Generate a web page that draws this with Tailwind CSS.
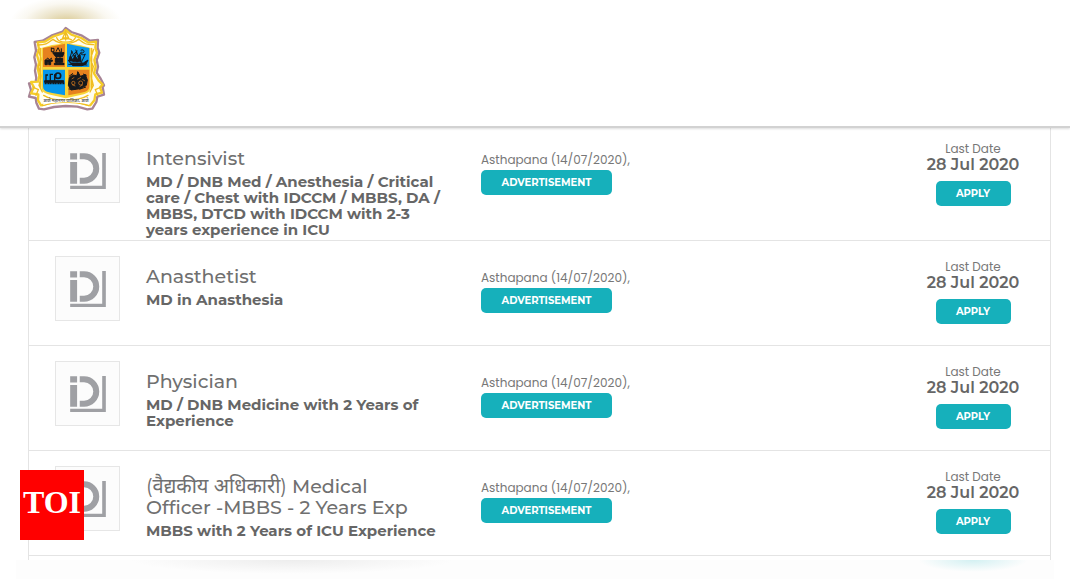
<!DOCTYPE html>
<html lang="en">
<head>
<meta charset="utf-8">
<meta name="viewport" content="width=device-width, initial-scale=1">
<title>Openings</title>
<script src="https://cdn.jsdelivr.net/npm/@tailwindcss/browser@4"></script>
</head>
<body class="relative bg-white font-[Montserrat,Inter,'Noto_Sans_Devanagari','Noto_Sans',sans-serif] text-[#666]">
<svg class="hidden" aria-hidden="true">
  <symbol id="mark" viewBox="150 84 108 109">
    <path fill="#9fa0a4" d="M150 85h21v19h-21zM150 111h21v66h-21zM179 85h13a46 46 0 0 1 0 92h-13v-18h13a28 28 0 0 0 0-56h-13zM247 84h11v109H150v-10h97z"/>
  </symbol>
</svg>

<header class="relative z-10 -mb-1.5 h-32 border-b-2 border-[#d2d2d2] bg-white pl-7 shadow-[0_1px_2px_#0002]">
  <div class="-ml-7 h-[19px] bg-[radial-gradient(ellipse_56px_26px_at_66px_23px,#d8c78d,#ebe3c8_40%,#faf8f1_75%,#fff)]"></div>
  <svg class="mt-[7px] h-[86px] w-[78px] overflow-visible" viewBox="84 78 234 258" role="img" aria-label="Municipal corporation emblem">
    <g stroke-linejoin="round">
      <path fill="#fff" stroke="#a78495" stroke-width="7" d="M197 84l17 12 32 11 24 15 24-2-1 24 5 14-8 22 4 20-4 18 12 18 10 20-4 6 4 22-20 6-3 16-12 20-15 2-30-8-35-2-35 3-30 7-15-2-8-18-2-14-20-4 6-20-6-20 19-1 3-15-4-22 3-18-5-22 5-20-4-26 24-4 26-15 34-12z"/>
      <path fill="#fffdf0" stroke="#f5cc28" stroke-width="7" d="M197 90l17 14 30 10 22 14 22-3-2 18 5 15-8 22 4 20-5 20 14 22 12 12-8 8 6 16-20 5-3 18-12 15-34-8-40-3-40 3-34 8-9-15 1-18-22-3 9-18-9-16 21-1 4-18-5-22 4-18-6-22 6-18-4-20 21-2 27-16 30-10z"/>
    </g>
    <g fill="none" stroke="#f0bd20" stroke-width="4" stroke-linecap="round">
      <path d="M114 135c22-1 27-3 45-17 20 17 57 17 77 0 16 13 24 17 45 16M114 148l10 30-9 22 9 28-7 28 10 20M281 148l-10 30 9 22-7 28 7 28-10 20M98 261l17 8-7 17M304 261l-18 8 7 17M121 145v120M275 145v120"/>
      <path d="M182 119c8-4 24-4 32 0M188 114l9-19 9 19zM197 90v30M170 113c5 18 49 18 56 0M131 286c20 13 38 15 66 15s46-2 67-15M128 317c22-8 41-12 69-12s47 4 69 12"/>
    </g>
    <path fill="#f9d437" d="M197 124l11 7 32 4 32 9v118c0 15-15 21-34 24l-41 9-39-9c-19-3-34-9-34-24V144l32-9 31-4z"/>
    <path fill="#e6821e" d="M129 144l34-6 32-7v70h-66z"/>
    <path fill="#0897ea" d="M201 131l32 7 35 6v57h-67z"/>
    <path fill="#0897ea" d="M129 209h66v77l-38-7c-20-4-28-8-28-22z"/>
    <path fill="#e6821e" d="M205 209h63v48c0 14-8 18-28 22l-35 7z"/>
    <g fill="none" stroke="#15181c" stroke-width="3">
      <path fill="#15181c" d="M158 158h34l-4 12h-21zM166 175h22v12h-22zM163 190h29v4h-29zM135 180h22v4h-5v10h-6v-7h-4v7h-7z"/>
      <path d="M154 143v12h8v-10h-8M174 143l-6 12M174 143l7 14M184 145v12M170 170v20M180 170v22M138 179l5-5 5 5 8-5"/>
      <path fill="#15181c" d="M205 181l7 8h38l14-9-6 12-12 5h-28zM211 168l10 15h-14zM224 166l11 18h-17zM240 164l3 20h-14z"/>
      <path d="M214 151l17 36M227 149l15 36M216 153l-8 26 23-27-9 31 23-28M242 151c11-6 14 8 4 8s3 10 10 3l-13 27M205 193l57 2"/>
      <path stroke-width="4" d="M138 245v-20h6M151 245v-22h8M164 245v-20h6"/><circle cx="174" cy="227" r="8" stroke-width="5"/>
      <path fill="#15181c" d="M134 242h57v5h-57z"/><path stroke-dasharray="4 1" stroke-width="6" d="M134 250h59"/>
      <path fill="#15181c" d="M208 233l10-8 12 2 4-11 7 13 15-5 6 16-3 16-19 10-27 4-8-14z"/>
      <path d="M207 229l12-9M233 214v16M249 222l11 4M206 267h21M238 268l20-7"/>
    </g>
    <g fill="none" stroke="#e6821e" stroke-width="2"><path d="M215 237l8-5M232 238l11-6M247 238l8 5M216 254l10 4M239 260l10-6"/><circle cx="220" cy="249" r="5"/><circle cx="242" cy="249" r="6"/></g>
    <path fill="#fff" d="M130 291c36 13 102 13 138 0v24c-32-11-106-11-138 0z"/>
    <text x="198" y="307" text-anchor="middle" fill="#555" font-family="Noto Sans Devanagari, Noto Sans, sans-serif" font-size="13" font-weight="600">ठाणे महानगर पालिका, ठाणे</text>
  </svg>
</header>

<main class="ml-7 mr-[19px] border-x border-t border-[#e4e4e4]">
  <ul>
    <li class="flex min-h-[118px] border-b border-[#e4e4e4]">
      <div class="ml-[26px] mt-[15px] flex size-[65px] shrink-0 items-center justify-center border border-[#e6e6e6] bg-[#fcfcfc]"><svg class="size-9" role="img" aria-label="iD"><use href="#mark"/></svg></div>
      <div class="ml-[26px] w-[295px] shrink-0 pt-[25px]">
        <h2 class="pr-4 text-[19px] leading-[21px] font-medium text-[#707070]">Intensivist</h2>
        <p class="mt-[5px] text-[15px] leading-4 font-bold">MD / DNB Med / Anesthesia / Critical care / Chest with IDCCM / MBBS, DA / MBBS, DTCD with IDCCM with 2-3 years experience in ICU</p>
      </div>
      <div class="ml-10 pt-[27px] font-[Poppins,Montserrat,Inter,sans-serif] text-xs leading-[19px] text-[#777]">
        <p>Asthapana (14/07/2020),</p>
        <button class="mt-px block h-[25px] w-[131px] rounded-[5px] bg-[#16b0bb] font-[Montserrat,Inter,sans-serif] text-[10px] font-bold text-white">ADVERTISEMENT</button>
      </div>
      <div class="ml-auto w-[154px] shrink-0 pt-[17px] text-center">
        <p class="font-[Poppins,Montserrat,Inter,sans-serif] text-xs leading-[17px] text-[#777]">Last Date</p>
        <p class="text-base leading-4 font-semibold">28 Jul 2020</p>
        <button class="mt-2 h-[25px] w-[75px] rounded-[5px] bg-[#16b0bb] text-[10px] font-bold text-white">APPLY</button>
      </div>
    </li>
    <li class="flex min-h-[105px] border-b border-[#e4e4e4]">
      <div class="ml-[26px] mt-[15px] flex size-[65px] shrink-0 items-center justify-center border border-[#e6e6e6] bg-[#fcfcfc]"><svg class="size-9" role="img" aria-label="iD"><use href="#mark"/></svg></div>
      <div class="ml-[26px] w-[295px] shrink-0 pt-[25px]">
        <h2 class="pr-4 text-[19px] leading-[21px] font-medium text-[#707070]">Anasthetist</h2>
        <p class="mt-[5px] text-[15px] leading-4 font-bold">MD in Anasthesia</p>
      </div>
      <div class="ml-10 pt-[27px] font-[Poppins,Montserrat,Inter,sans-serif] text-xs leading-[19px] text-[#777]">
        <p>Asthapana (14/07/2020),</p>
        <button class="mt-px block h-[25px] w-[131px] rounded-[5px] bg-[#16b0bb] font-[Montserrat,Inter,sans-serif] text-[10px] font-bold text-white">ADVERTISEMENT</button>
      </div>
      <div class="ml-auto w-[154px] shrink-0 pt-[17px] text-center">
        <p class="font-[Poppins,Montserrat,Inter,sans-serif] text-xs leading-[17px] text-[#777]">Last Date</p>
        <p class="text-base leading-4 font-semibold">28 Jul 2020</p>
        <button class="mt-2 h-[25px] w-[75px] rounded-[5px] bg-[#16b0bb] text-[10px] font-bold text-white">APPLY</button>
      </div>
    </li>
    <li class="flex min-h-[105px] border-b border-[#e4e4e4]">
      <div class="ml-[26px] mt-[15px] flex size-[65px] shrink-0 items-center justify-center border border-[#e6e6e6] bg-[#fcfcfc]"><svg class="size-9" role="img" aria-label="iD"><use href="#mark"/></svg></div>
      <div class="ml-[26px] w-[295px] shrink-0 pt-[25px]">
        <h2 class="pr-4 text-[19px] leading-[21px] font-medium text-[#707070]">Physician</h2>
        <p class="mt-[5px] text-[15px] leading-4 font-bold">MD / DNB Medicine with 2 Years of Experience</p>
      </div>
      <div class="ml-10 pt-[27px] font-[Poppins,Montserrat,Inter,sans-serif] text-xs leading-[19px] text-[#777]">
        <p>Asthapana (14/07/2020),</p>
        <button class="mt-px block h-[25px] w-[131px] rounded-[5px] bg-[#16b0bb] font-[Montserrat,Inter,sans-serif] text-[10px] font-bold text-white">ADVERTISEMENT</button>
      </div>
      <div class="ml-auto w-[154px] shrink-0 pt-[17px] text-center">
        <p class="font-[Poppins,Montserrat,Inter,sans-serif] text-xs leading-[17px] text-[#777]">Last Date</p>
        <p class="text-base leading-4 font-semibold">28 Jul 2020</p>
        <button class="mt-2 h-[25px] w-[75px] rounded-[5px] bg-[#16b0bb] text-[10px] font-bold text-white">APPLY</button>
      </div>
    </li>
    <li class="flex min-h-[105px] border-b border-[#e4e4e4]">
      <div class="ml-[26px] mt-[15px] flex size-[65px] shrink-0 items-center justify-center border border-[#e6e6e6] bg-[#fcfcfc]"><svg class="size-9" role="img" aria-label="iD"><use href="#mark"/></svg></div>
      <div class="ml-[26px] w-[295px] shrink-0 pt-[25px]">
        <h2 class="pr-4 text-[19px] leading-[21px] font-medium text-[#707070]"><span class="text-xl leading-[21px] font-normal">(वैद्यकीय अधिकारी)</span> Medical Officer -MBBS - 2 Years Exp</h2>
        <p class="mt-[5px] text-[15px] leading-4 font-bold">MBBS with 2 Years of ICU Experience</p>
      </div>
      <div class="ml-10 pt-[27px] font-[Poppins,Montserrat,Inter,sans-serif] text-xs leading-[19px] text-[#777]">
        <p>Asthapana (14/07/2020),</p>
        <button class="mt-px block h-[25px] w-[131px] rounded-[5px] bg-[#16b0bb] font-[Montserrat,Inter,sans-serif] text-[10px] font-bold text-white">ADVERTISEMENT</button>
      </div>
      <div class="ml-auto w-[154px] shrink-0 pt-[17px] text-center">
        <p class="font-[Poppins,Montserrat,Inter,sans-serif] text-xs leading-[17px] text-[#777]">Last Date</p>
        <p class="text-base leading-4 font-semibold">28 Jul 2020</p>
        <button class="mt-2 h-[25px] w-[75px] rounded-[5px] bg-[#16b0bb] text-[10px] font-bold text-white">APPLY</button>
      </div>
    </li>
  </ul>
  <div class="h-1"></div>
</main>
<footer class="mx-4 flex h-[19px] bg-[#fdfdfd]">
  <div class="ml-[114px] h-3.5 w-[325px] bg-[radial-gradient(ellipse_at_top,#ededed,#fdfdfd_70%)]"></div>
  <div class="ml-auto mr-[26px] h-3 w-[110px] bg-[radial-gradient(ellipse_at_top,#d3f0f2,#fdfdfd_70%)]"></div>
</footer>
<div class="absolute top-[470px] left-5 flex h-[70px] w-16 items-center justify-center bg-[#f00] pb-1.5 font-['Liberation_Serif',serif] text-[32px] leading-none font-bold text-white">TOI</div>
</body>
</html>
